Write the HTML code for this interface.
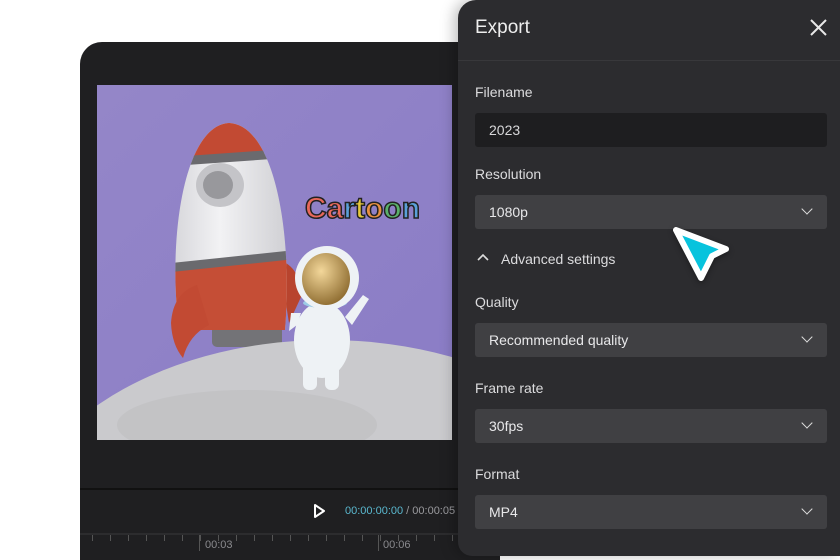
<!DOCTYPE html>
<html><head><meta charset="utf-8"><style>
*{margin:0;padding:0;box-sizing:border-box}
html,body{overflow:hidden}
body{width:840px;height:560px;background:#fff;position:relative;overflow:hidden;font-family:"Liberation Sans",sans-serif}
.ed{position:absolute;left:80px;top:42px;width:420px;height:518px;background:#1f1f21;border-radius:22px 0 0 0;overflow:hidden}
.pan{position:absolute;left:458px;top:0;width:382px;height:556px;background:#2c2c2f;border-radius:18px 0 0 14px;box-shadow:-4px 0 14px rgba(0,0,0,.25);color:#e4e4e6}
.lbl{position:absolute;left:17px;font-size:14px;color:#dcdcde}
.box{position:absolute;left:17px;width:352px;height:34px;background:#404043;border-radius:3px;font-size:14px;color:#e8e8ea;padding:9px 0 0 14px}
.chev{position:absolute;right:16px;top:10px;width:8px;height:8px;border-right:1.6px solid #ddd;border-bottom:1.6px solid #ddd;transform:rotate(45deg)}
</style></head><body>
<div class="ed">
<svg style="position:absolute;left:17px;top:43px" width="355" height="355" viewBox="0 0 355 355">
<defs><linearGradient id="bg" x1="0" y1="0" x2="1" y2="1"><stop offset="0" stop-color="#9486c8"/><stop offset="1" stop-color="#8a7cc6"/></linearGradient>
<radialGradient id="gd" cx=".4" cy=".35" r=".7"><stop offset="0" stop-color="#f3d79a"/><stop offset="1" stop-color="#8c6a2e"/></radialGradient>
<linearGradient id="wb" x1="0" x2="1"><stop offset="0" stop-color="#d8d8dc"/><stop offset=".4" stop-color="#f2f2f4"/><stop offset="1" stop-color="#d0d0d4"/></linearGradient>
<clipPath id="rc"><path d="M82 245 C70 150 88 40 132 38 C178 40 196 150 188 245Z"/></clipPath></defs>
<rect width="355" height="355" fill="url(#bg)"/>
<path d="M182 175 Q204 182 204 212 L192 238Z" fill="#b8442e"/>
<rect x="115" y="236" width="70" height="26" rx="5" fill="#737377"/>
<path d="M82 245 C70 150 88 40 132 38 C178 40 196 150 188 245Z" fill="url(#wb)"/>
<g clip-path="url(#rc)">
<rect x="60" y="30" width="150" height="40" fill="#c24a33" transform="rotate(-4 132 70)"/>
<rect x="60" y="68" width="150" height="9" fill="#6a6a6e" transform="rotate(-4 132 70)"/>
<rect x="60" y="180" width="150" height="80" fill="#c54e36" transform="rotate(-6 132 180)"/>
<rect x="60" y="172" width="150" height="9" fill="#6a6a6e" transform="rotate(-6 132 180)"/>
</g>
<path d="M100 200 Q76 208 74 238 Q75 260 86 273 Q92 250 112 240Z" fill="#c24a33"/>
<ellipse cx="123" cy="100" rx="24" ry="22" fill="#c4c4c8"/><ellipse cx="121" cy="100" rx="15" ry="14" fill="#98989c"/>
<ellipse cx="230" cy="470" rx="320" ry="215" fill="#cacacd"/>
<ellipse cx="150" cy="340" rx="130" ry="35" fill="#bbbbbe" opacity=".5"/>
<ellipse cx="225" cy="255" rx="28" ry="38" fill="#eef2f5"/>
<rect x="206" y="270" width="14" height="35" rx="6" fill="#eef2f5"/><rect x="228" y="270" width="14" height="35" rx="6" fill="#eef2f5"/>
<path d="M200 240 L192 246 L194 228 L204 228Z" fill="#eef2f5"/><path d="M248 232 L266 210 L272 214 L255 240Z" fill="#eef2f5"/>
<ellipse cx="228" cy="218" rx="22" ry="5" fill="#9ccbe6"/>
<circle cx="230" cy="193" r="32" fill="#eef2f5"/>
<ellipse cx="229" cy="194" rx="24" ry="26" fill="url(#gd)"/>
<text x="208" y="133" font-size="30" font-weight="bold" font-family="Liberation Sans" stroke="#222" stroke-width="1.5"><tspan fill="#e8685a">Ca</tspan><tspan fill="#5aa0d8">r</tspan><tspan fill="#e6c83a">t</tspan><tspan fill="#e89040">o</tspan><tspan fill="#5ab06a">o</tspan><tspan fill="#5aa0d8">n</tspan></text>
</svg>
<div style="position:absolute;left:0;top:446px;width:420px;height:2px;background:#111"></div>
<svg style="position:absolute;left:232px;top:461px" width="14" height="16"><path d="M3 2 L12 8 L3 14Z" fill="none" stroke="#fff" stroke-width="2" stroke-linejoin="round"/></svg>
<div style="position:absolute;left:265px;top:463px;font-size:11px;color:#5ab8cf">00:00:00:00 <span style="color:#9a9a9e">/ 00:00:05</span></div>
<div style="position:absolute;left:0;top:491px;width:420px;height:2px;background:#2c2c2e"></div>
<div style="position:absolute;left:0;top:493px;width:380px;height:6px;background:repeating-linear-gradient(90deg,transparent 0 12px,#555 12px 13px,transparent 13px 18px)"></div>
<div style="position:absolute;left:119px;top:493px;width:1px;height:16px;background:#555"></div>
<div style="position:absolute;left:298px;top:493px;width:1px;height:16px;background:#555"></div>
<div style="position:absolute;left:125px;top:497px;font-size:11px;color:#8a8a8e">00:03</div>
<div style="position:absolute;left:303px;top:497px;font-size:11px;color:#8a8a8e">00:06</div>
</div>
<div class="pan">
<div style="position:absolute;left:17px;top:17px;font-size:19px;color:#eee">Export</div>
<svg style="position:absolute;left:351px;top:18px" width="19" height="19"><path d="M2 2L17 17M17 2L2 17" stroke="#e8e8e8" stroke-width="2"/></svg>
<div style="position:absolute;left:0;top:60px;width:382px;height:1px;background:#38383b"></div>
<div class="lbl" style="top:84px">Filename</div>
<div class="box" style="top:113px;background:#1e1e20;color:#d8d8da">2023</div>
<div class="lbl" style="top:166px">Resolution</div>
<div class="box" style="top:195px">1080p<div class="chev"></div></div>
<svg style="position:absolute;left:19px;top:253px" width="12" height="10"><path d="M1 7L6 2L11 7" fill="none" stroke="#ddd" stroke-width="1.6"/></svg>
<div style="position:absolute;left:43px;top:251px;font-size:14px;color:#dcdcde">Advanced settings</div>
<div class="lbl" style="top:294px">Quality</div>
<div class="box" style="top:323px">Recommended quality<div class="chev"></div></div>
<div class="lbl" style="top:380px">Frame rate</div>
<div class="box" style="top:409px">30fps<div class="chev"></div></div>
<div class="lbl" style="top:466px">Format</div>
<div class="box" style="top:495px">MP4<div class="chev"></div></div>
</div>
<svg style="position:absolute;left:660px;top:215px" width="80" height="75"><path d="M16 15 L66 34 L52 41 L41 63Z" fill="#07c3dd" stroke="#fff" stroke-width="6" stroke-linejoin="round" style="filter:drop-shadow(0 2px 3px rgba(0,0,0,.35))"/></svg>
</body></html>
